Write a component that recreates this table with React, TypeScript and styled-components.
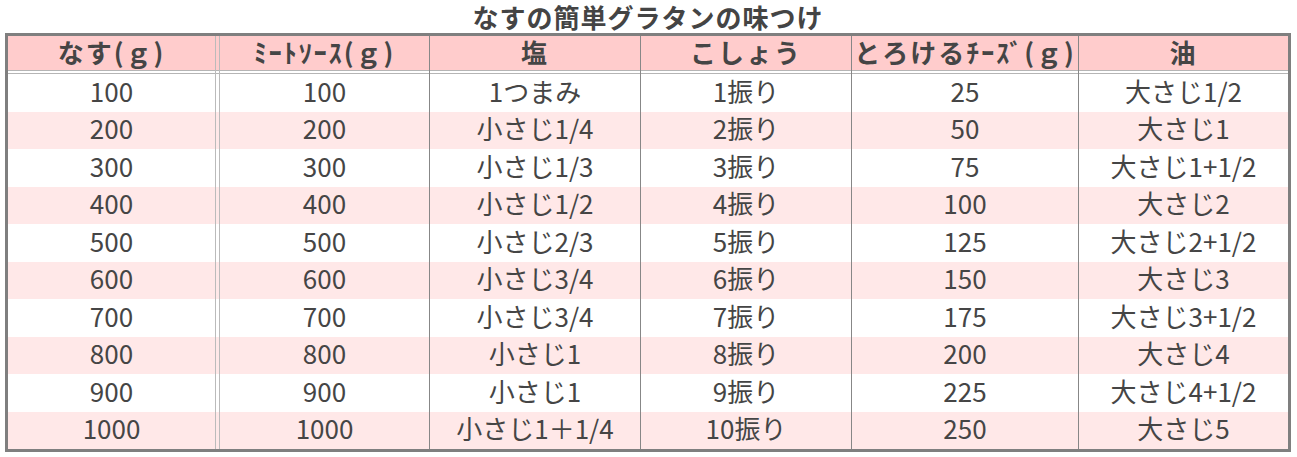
import styled, { createGlobalStyle } from "styled-components";

type Row = string[];

const header: Row = [
  "なす(ｇ)",
  "ﾐｰﾄｿｰｽ(ｇ)",
  "塩",
  "こしょう",
  "とろけるﾁｰｽﾞ(ｇ)",
  "油",
];

const rows: Row[] = [
  ["100", "100", "1つまみ", "1振り", "25", "大さじ1/2"],
  ["200", "200", "小さじ1/4", "2振り", "50", "大さじ1"],
  ["300", "300", "小さじ1/3", "3振り", "75", "大さじ1+1/2"],
  ["400", "400", "小さじ1/2", "4振り", "100", "大さじ2"],
  ["500", "500", "小さじ2/3", "5振り", "125", "大さじ2+1/2"],
  ["600", "600", "小さじ3/4", "6振り", "150", "大さじ3"],
  ["700", "700", "小さじ3/4", "7振り", "175", "大さじ3+1/2"],
  ["800", "800", "小さじ1", "8振り", "200", "大さじ4"],
  ["900", "900", "小さじ1", "9振り", "225", "大さじ4+1/2"],
  ["1000", "1000", "小さじ1＋1/4", "10振り", "250", "大さじ5"],
];

const GlobalStyle = createGlobalStyle`
  body {
    margin: 0;
    background: #fff;
    font-family: "Noto Sans CJK JP", "Noto Sans", sans-serif;
    color: #444;
  }
`;

const Page = styled.div`
  width: 1286px;
  padding: 0 5px;
`;

const Title = styled.h1`
  margin: 0;
  height: 33px;
  line-height: 33px;
  text-align: center;
  font-size: 26px;
  font-weight: 700;
  color: #444;
  letter-spacing: 1px;
`;

const Table = styled.div`
  border: 3px solid #7f7f7f;
`;

// header carries the pink band and the two thin rules below it
const Line = styled.div<{ $head?: boolean; $shade?: boolean }>`
  display: grid;
  grid-template-columns: 211px 210px 211px 211px 227px 210px;
  height: ${(p) => (p.$head ? "38px" : "37.5px")};
  background: ${(p) =>
    p.$head
      ? "linear-gradient(#ffcccc 34px, #b5b5b5 34px, #b5b5b5 35px, #fff 35px, #fff 37px, #b5b5b5 37px)"
      : p.$shade
      ? "#ffe8e8"
      : "#fff"};
`;

const Cell = styled.div<{ $col: number; $head?: boolean }>`
  display: flex;
  align-items: center;
  justify-content: center;
  box-sizing: border-box;
  height: 100%;
  padding-bottom: ${(p) => (p.$head ? "7px" : "4px")};
  font-size: 26px;
  line-height: 1;
  font-weight: ${(p) => (p.$head ? 700 : 400)};
  letter-spacing: ${(p) => (p.$head ? "2px" : "0")};
  color: #454545;
  white-space: nowrap;
  ${(p) =>
    p.$col === 0
      ? "margin-right: 3px; border-right: 1px solid #bbb;"
      : p.$col === 1
      ? "border-left: 1px solid #bbb;"
      : "border-left: 1px solid #878787;"}
`;

export default function App() {
  return (
    <>
      <GlobalStyle />
      <Page>
        <Title>なすの簡単グラタンの味つけ</Title>
        <Table>
          <Line $head>
            {header.map((h, i) => (
              <Cell key={i} $col={i} $head>
                {h}
              </Cell>
            ))}
          </Line>
          {rows.map((r, ri) => (
            <Line key={ri} $shade={ri % 2 === 1}>
              {r.map((c, ci) => (
                <Cell key={ci} $col={ci}>
                  {c}
                </Cell>
              ))}
            </Line>
          ))}
        </Table>
      </Page>
    </>
  );
}
